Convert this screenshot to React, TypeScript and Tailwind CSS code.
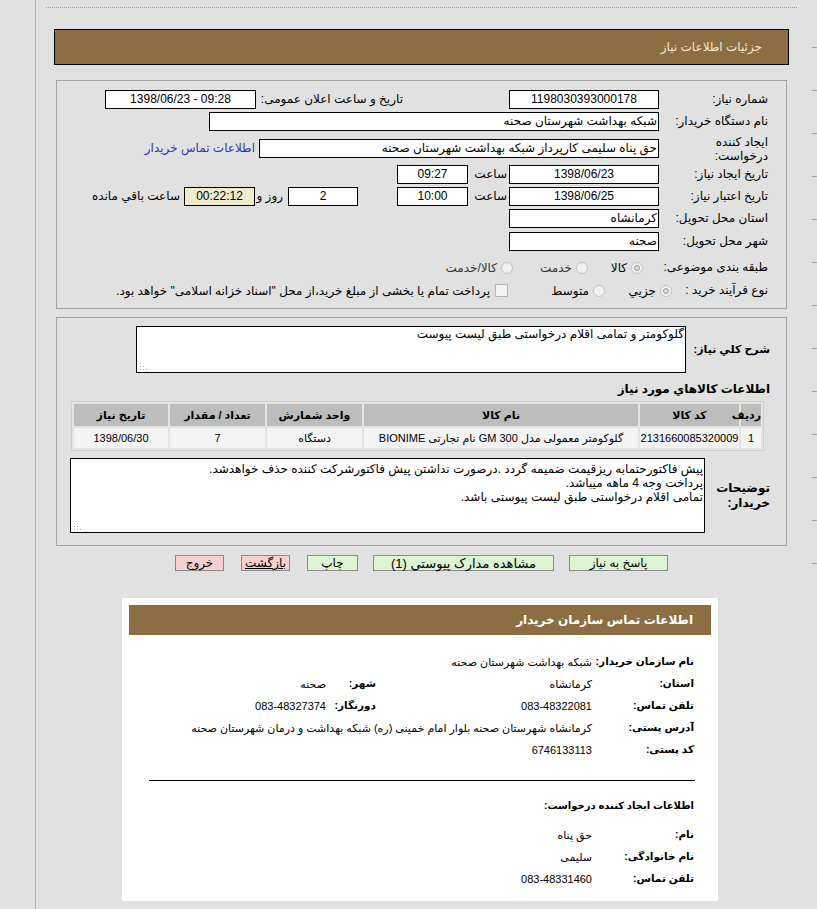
import React from "react";

function Radio({ checked }: { checked?: boolean }) {
  return (
    <span className="inline-flex w-[12px] h-[12px] shrink-0 items-center justify-center rounded-full border border-[#c2c2c2] bg-[#f1f1f1]">
      {checked ? <span className="w-[6px] h-[6px] rounded-full border border-[#9c9c9c] bg-[#dcdcdc]" /> : null}
    </span>
  );
}

function Grip() {
  return (
    <svg className="absolute left-[3px] bottom-[2px]" width="7" height="7" viewBox="0 0 7 7">
      <rect x="0" y="6" width="1" height="1" fill="#b0b0b0" />
      <rect x="3" y="6" width="1" height="1" fill="#b0b0b0" />
      <rect x="6" y="6" width="1" height="1" fill="#b0b0b0" />
      <rect x="0" y="3" width="1" height="1" fill="#b0b0b0" />
      <rect x="3" y="3" width="1" height="1" fill="#b0b0b0" />
      <rect x="0" y="0" width="1" height="1" fill="#b0b0b0" />
    </svg>
  );
}

export default function App() {
  const ticks = Array.from({ length: 13 });
  return (
    <div className="flex min-h-[909px] w-[817px] bg-[#e1e1e1] text-[12px] text-black font-['Liberation_Sans','DejaVu_Sans',sans-serif]">
      <div className="w-[36px] shrink-0 border-r border-[#b1b1b1]" />
      <div className="flex w-[771px] shrink-0 flex-col">
        <div className="ml-[10px] mt-[7px] w-[751px] border-t border-dotted border-[#9a9a9a]" />
        <div
          dir="rtl"
          className="ml-[18px] mt-[21px] flex h-[36px] w-[735px] items-center border border-black bg-[#8d6e42] pr-[26px] text-[#f3e9d4]"
        >
          جزئیات اطلاعات نیاز
        </div>

        {/* Panel 1 */}
        <div dir="rtl" className="ml-[20px] mt-[15px] w-[731px] border border-[#a3a3a3] pt-[9px] pr-[18px] pb-[6px]">
          <div className="flex h-[22px] items-start">
            <div className="w-[109px] leading-[19px]">شماره نیاز:</div>
            <div dir="ltr" className="h-[19px] w-[150px] border border-black bg-white text-center leading-[17px]">1198030393000178</div>
            <div className="w-[106px]" />
            <div className="w-[147px] leading-[19px]">تاریخ و ساعت اعلان عمومی:</div>
            <div dir="ltr" className="h-[19px] w-[151px] border border-black bg-white text-center leading-[17px]">1398/06/23 - 09:28</div>
          </div>
          <div className="flex h-[27px] items-start">
            <div className="w-[109px] leading-[19px]">نام دستگاه خریدار:</div>
            <div className="h-[19px] w-[450px] border border-black bg-white pr-[1px] leading-[17px]">شبکه بهداشت شهرستان صحنه</div>
          </div>
          <div className="flex h-[26px] items-start">
            <div className="-mt-[4px] flex w-[109px] flex-col leading-[14px]">
              <span>ایجاد کننده</span>
              <span>درخواست:</span>
            </div>
            <div className="h-[19px] w-[400px] border border-black bg-white pr-[1px] leading-[17px]">حق پناه سلیمی کارپرداز شبکه بهداشت شهرستان صحنه</div>
            <div className="mr-[4px] leading-[19px] text-[#3434a8]">اطلاعات تماس خریدار</div>
          </div>
          <div className="flex h-[22px] items-start">
            <div className="w-[109px] leading-[19px]">تاریخ ایجاد نیاز:</div>
            <div dir="ltr" className="h-[19px] w-[150px] border border-black bg-white text-center leading-[17px]">1398/06/23</div>
            <div className="w-[41px] pr-[2px] leading-[19px]">ساعت</div>
            <div dir="ltr" className="h-[19px] w-[71px] border border-black bg-white text-center leading-[17px]">09:27</div>
          </div>
          <div className="flex h-[22px] items-start">
            <div className="w-[109px] leading-[19px]">تاریخ اعتبار نیاز:</div>
            <div dir="ltr" className="h-[19px] w-[150px] border border-black bg-white text-center leading-[17px]">1398/06/25</div>
            <div className="w-[41px] pr-[2px] leading-[19px]">ساعت</div>
            <div dir="ltr" className="h-[19px] w-[71px] border border-black bg-white text-center leading-[17px]">10:00</div>
            <div className="w-[39px]" />
            <div dir="ltr" className="h-[19px] w-[70px] border border-black bg-white text-center leading-[17px]">2</div>
            <div className="w-[33px] pr-[5px] leading-[19px]">روز و</div>
            <div dir="ltr" className="h-[19px] w-[71px] border border-black bg-[#efebcb] text-center leading-[17px]">00:22:12</div>
            <div className="mr-[4px] leading-[19px]">ساعت باقي مانده</div>
          </div>
          <div className="flex h-[23px] items-start">
            <div className="w-[109px] leading-[19px]">استان محل تحویل:</div>
            <div className="h-[19px] w-[150px] border border-black bg-white pr-[1px] leading-[17px]">کرمانشاه</div>
          </div>
          <div className="flex h-[24px] items-start">
            <div className="w-[109px] leading-[19px]">شهر محل تحویل:</div>
            <div className="h-[19px] w-[150px] border border-black bg-white pr-[1px] leading-[17px]">صحنه</div>
          </div>
          <div className="flex h-[23px] items-center">
            <div className="w-[125px] whitespace-nowrap leading-[19px]">طبقه بندی موضوعی:</div>
            <div className="flex w-[55px] items-center gap-[4px]">
              <Radio checked />
              <span>کالا</span>
            </div>
            <div className="flex w-[75px] items-center gap-[4px] text-[#333]">
              <Radio />
              <span>خدمت</span>
            </div>
            <div className="flex items-center gap-[4px] text-[#333]">
              <Radio />
              <span>کالا/خدمت</span>
            </div>
          </div>
          <div className="flex h-[23px] items-center">
            <div className="w-[96px] whitespace-nowrap leading-[19px]">نوع فرآیند خرید :</div>
            <div className="flex w-[67px] items-center gap-[4px]">
              <Radio checked />
              <span>جزيي</span>
            </div>
            <div className="flex w-[97px] items-center gap-[4px]">
              <Radio />
              <span>متوسط</span>
            </div>
            <div className="flex items-center gap-[5px]">
              <span className="h-[13px] w-[13px] shrink-0 border border-[#b5b5b5] bg-[#f3f3f3]" />
              <span className="whitespace-nowrap">پرداخت تمام یا بخشی از مبلغ خرید،از محل "اسناد خزانه اسلامی" خواهد بود.</span>
            </div>
          </div>
        </div>

        {/* Panel 2 */}
        <div dir="rtl" className="ml-[20px] mt-[8px] w-[731px] border border-[#a3a3a3] pt-[8px] pr-[16px] pb-[12px]">
          <div className="flex h-[47px] items-center">
            <div className="w-[84px] whitespace-nowrap text-[11px] font-bold">شرح کلي نیاز:</div>
            <div className="relative h-[47px] w-[550px] border border-black bg-white pr-[1px] leading-[15px]">
              گلوکومتر و تمامی اقلام درخواستی طبق لیست پیوست
              <Grip />
            </div>
          </div>
          <div className="mt-[8px] h-[16px] text-[12px] font-bold leading-[16px]">اطلاعات کالاهاي مورد نیاز</div>
          <table className="mt-[4px] mr-[6px] w-[693px] table-fixed border-separate border-spacing-[2px] border border-[#cfcfcf] bg-[#e4e4e4] text-[11px]">
            <colgroup>
              <col className="w-[20px]" />
              <col className="w-[99px]" />
              <col className="w-[274px]" />
              <col className="w-[95px]" />
              <col className="w-[95px]" />
              <col />
            </colgroup>
            <thead>
              <tr className="h-[22px] bg-[#bdbdbd]">
                <th className="whitespace-nowrap font-bold">ردیف</th>
                <th className="font-bold">کد کالا</th>
                <th className="font-bold">نام کالا</th>
                <th className="font-bold">واحد شمارش</th>
                <th className="font-bold">تعداد / مقدار</th>
                <th className="font-bold">تاریخ نیاز</th>
              </tr>
            </thead>
            <tbody>
              <tr className="h-[20px] bg-[#f3f3f3] text-center">
                <td>1</td>
                <td>2131660085320009</td>
                <td className="whitespace-nowrap">گلوکومتر معمولی مدل GM 300 نام تجارتی BIONIME</td>
                <td>دستگاه</td>
                <td>7</td>
                <td>1398/06/30</td>
              </tr>
            </tbody>
          </table>
          <div className="mt-[7px] flex items-center">
            <div className="flex w-[65px] flex-col text-[12px] font-bold leading-[15px]">
              <span>توضیحات</span>
              <span>خریدار:</span>
            </div>
            <div className="relative h-[75px] w-[635px] border border-black bg-white pt-[3px] pr-[1px] leading-[14px]">
              <div>پیش فاکتورحتمابه ریزقیمت ضمیمه گردد .درصورت نداشتن پیش فاکتورشرکت کننده حذف خواهدشد.</div>
              <div>پرداخت وجه 4 ماهه میباشد.</div>
              <div>تمامی اقلام درخواستی طبق لیست پیوستی باشد.</div>
              <Grip />
            </div>
          </div>
        </div>

        {/* Buttons */}
        <div dir="rtl" className="mt-[9px] flex justify-center">
          <div className="flex h-[16px] w-[99px] items-center justify-center border border-[#8a8a8a] bg-[#ddf4d2] leading-none">پاسخ به نیاز</div>
          <div className="mr-[15px] flex h-[16px] w-[181px] items-center justify-center border border-[#8a8a8a] bg-[#ddf4d2] text-[13px] leading-none">مشاهده مدارک پیوستي (1)</div>
          <div className="mr-[15px] flex h-[16px] w-[51px] items-center justify-center border border-[#8a8a8a] bg-[#ddf4d2] leading-none">چاپ</div>
          <div className="mr-[17px] flex h-[16px] w-[49px] items-center justify-center overflow-visible border border-[#8a8a8a] bg-[#f7cfcf] leading-none underline whitespace-nowrap">بازگشت</div>
          <div className="mr-[17px] flex h-[16px] w-[49px] items-center justify-center border border-[#8a8a8a] bg-[#f7cfcf] leading-none">خروج</div>
        </div>

        {/* Card */}
        <div dir="rtl" className="ml-[86px] mt-[27px] w-[596px] bg-white px-[7px] pt-[7px] pb-[11px] text-[11px]">
          <div className="flex h-[30px] items-center bg-[#8d6e42] pr-[18px] text-[12px] font-bold text-white">اطلاعات تماس سازمان خریدار</div>
          <div className="pt-[16px] pr-[17px]">
            <div className="grid h-[22px] grid-cols-[102px_216px_50px_1fr] items-center">
              <div className="whitespace-nowrap text-[10.5px] font-bold">نام سازمان خریدار:</div>
              <div className="col-span-3">شبکه بهداشت شهرستان صحنه</div>
            </div>
            <div className="grid h-[22px] grid-cols-[102px_216px_50px_1fr] items-center">
              <div className="whitespace-nowrap text-[10.5px] font-bold">استان:</div>
              <div>کرمانشاه</div>
              <div className="whitespace-nowrap text-[10.5px] font-bold">شهر:</div>
              <div>صحنه</div>
            </div>
            <div className="grid h-[22px] grid-cols-[102px_216px_50px_1fr] items-center">
              <div className="whitespace-nowrap text-[10.5px] font-bold">تلفن تماس:</div>
              <div>083-48322081</div>
              <div className="whitespace-nowrap text-[10.5px] font-bold">دورنگار:</div>
              <div>083-48327374</div>
            </div>
            <div className="grid h-[22px] grid-cols-[102px_216px_50px_1fr] items-center">
              <div className="whitespace-nowrap text-[10.5px] font-bold">آدرس پستی:</div>
              <div className="col-span-3 whitespace-nowrap">کرمانشاه شهرستان صحنه بلوار امام خمینی (ره) شبکه بهداشت و درمان شهرستان صحنه</div>
            </div>
            <div className="grid h-[22px] grid-cols-[102px_216px_50px_1fr] items-center">
              <div className="whitespace-nowrap text-[10.5px] font-bold">کد پستی:</div>
              <div>6746133113</div>
            </div>
          </div>
          <div className="mt-[19px] mr-[16px] ml-[20px] border-t border-black" />
          <div className="mt-[16px] h-[18px] pr-[17px] text-[10px] font-bold leading-[18px]">اطلاعات ایجاد کننده درخواست:</div>
          <div className="mt-[9px] pr-[17px]">
            <div className="grid h-[22px] grid-cols-[102px_1fr] items-center">
              <div className="whitespace-nowrap text-[10.5px] font-bold">نام:</div>
              <div>حق پناه</div>
            </div>
            <div className="grid h-[22px] grid-cols-[102px_1fr] items-center">
              <div className="whitespace-nowrap text-[10.5px] font-bold">نام خانوادگی:</div>
              <div>سلیمی</div>
            </div>
            <div className="grid h-[22px] grid-cols-[102px_1fr] items-center">
              <div className="whitespace-nowrap text-[10.5px] font-bold">تلفن تماس:</div>
              <div>083-48331460</div>
            </div>
          </div>
        </div>
      </div>
      <div className="flex flex-1 flex-col items-end gap-[42px] pt-[47px]">
        {ticks.map((_, i) => (
          <div key={i} className="h-px w-[5px] bg-[#a8a8a8]" />
        ))}
      </div>
    </div>
  );
}
